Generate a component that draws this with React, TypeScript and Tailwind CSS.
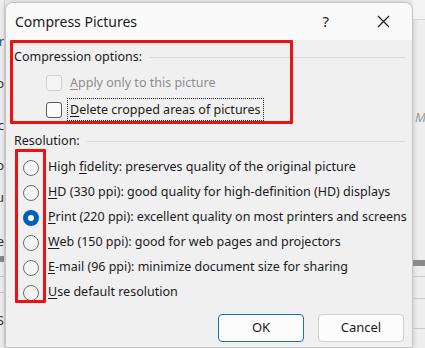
const font = { fontFamily: '"Noto Sans", "Open Sans", sans-serif' };

function Check({ label, keyChar, disabled, focused }: { label: string; keyChar: string; disabled?: boolean; focused?: boolean }) {
  const rest = label.slice(1);
  return (
    <div className="flex items-center h-[27px] pl-[32px] gap-[7px]">
      <span
        className={
          "w-[16px] h-[16px] rounded-[3px] border shrink-0 " +
          (disabled ? "border-[#d0d0d0] bg-[#f5f5f5]" : "border-[#5a5a5a] bg-[#fbfbfb]")
        }
      />
      <span
        className={
          "text-[12.5px] leading-[19px] px-[1px] " +
          (disabled ? "text-[#8d8d8d] " : "text-[#1a1a1a] ") +
          (focused ? "outline outline-1 outline-dotted outline-[#222] outline-offset-[1px]" : "")
        }
      >
        <span className="underline underline-offset-2">{keyChar}</span>
        {rest}
      </span>
    </div>
  );
}

function Radio({ pre, keyChar, post, checked }: { pre?: string; keyChar: string; post: string; checked?: boolean }) {
  return (
    <div className="flex items-center h-[25px] pl-[10px] gap-[9px]">
      {checked ? (
        <span className="w-[16px] h-[16px] rounded-full bg-[#005fb8] flex items-center justify-center shrink-0">
          <span className="w-[6px] h-[6px] rounded-full bg-white" />
        </span>
      ) : (
        <span className="w-[16px] h-[16px] rounded-full border border-[#6f6f6f] bg-[#f5f5f5] shrink-0" />
      )}
      <span className="text-[12.5px] text-[#1a1a1a] whitespace-nowrap">
        {pre}
        <span className="underline underline-offset-2">{keyChar}</span>
        {post}
      </span>
    </div>
  );
}

function GroupTitle({ text }: { text: string }) {
  return (
    <div className="flex items-center h-5 gap-[7px]">
      <span className="text-[12.5px] text-[#1a1a1a] whitespace-nowrap">{text}</span>
      <span className="flex-1 h-px bg-[#dadada]" />
    </div>
  );
}

export default function App() {
  return (
    <div className="w-[425px] h-[348px] bg-[#eeeeee] flex overflow-hidden" style={font}>
      {/* left edge of the window behind */}
      <div className="w-[5px] shrink-0 flex flex-col items-end overflow-hidden text-[13px] text-[#333] border-r border-[#d8d8d8]">
        <div className="h-[32px]" />
        <span className="h-[20px] text-[#2b4f8a] whitespace-nowrap">r</span>
        <div className="h-[22px]" />
        <span className="h-[20px] whitespace-nowrap">o</span>
        <div className="h-[22px]" />
        <span className="h-[20px] whitespace-nowrap">c</span>
        <div className="h-[20px]" />
        <span className="h-[20px] whitespace-nowrap">o</span>
        <div className="h-[12px]" />
        <span className="h-[20px] whitespace-nowrap">u</span>
        <div className="h-[24px]" />
        <span className="h-[20px] whitespace-nowrap">e</span>
        <div className="h-[4px]" />
        <div className="w-full h-[6px] bg-[#8a8a8a]" />
        <div className="h-[14px]" />
        <div className="w-full h-px bg-[#c8c8c8]" />
        <div className="h-[15px]" />
        <div className="w-full h-px bg-[#c8c8c8]" />
        <div className="h-[18px]" />
        <span className="h-[20px] whitespace-nowrap">S</span>
      </div>

      {/* dialog */}
      <div className="w-[408px] shrink-0 mt-[2px] rounded-t-[8px] border border-[#c4c4c4] bg-[#f0f0f0] overflow-hidden shadow-[0_0_6px_rgba(0,0,0,0.18)] flex flex-col">
        <div className="h-[37px] bg-[#f9f9f9] flex items-center pl-[9px] pr-[20px]">
          <span className="text-[14px] text-[#1a1a1a] flex-1">Compress Pictures</span>
          <span className="text-[15px] text-[#222] mr-[48px]">?</span>
          <svg width="13" height="13" viewBox="0 0 13 13" className="mr-[2px]">
            <path d="M1 1L12 12M12 1L1 12" stroke="#222" strokeWidth="1.2" />
          </svg>
        </div>

        <div className="relative flex flex-col px-[8px] pr-[2px] pt-[7px]">
          <div className="mr-[5px]">
            <GroupTitle text="Compression options:" />
          </div>
          <div className="mt-[2px]">
            <Check label="Apply only to this picture" keyChar="A" disabled />
            <Check label="Delete cropped areas of pictures" keyChar="D" focused />
          </div>

          <div className="mt-[8px] mr-[5px]">
            <GroupTitle text="Resolution:" />
          </div>
          <div className="mt-[4px] -ml-[1px] flex flex-col">
            <Radio pre="High " keyChar="f" post="idelity: preserves quality of the original picture" />
            <Radio keyChar="H" post="D (330 ppi): good quality for high-definition (HD) displays" />
            <Radio keyChar="P" post="rint (220 ppi): excellent quality on most printers and screens" checked />
            <Radio keyChar="W" post="eb (150 ppi): good for web pages and projectors" />
            <Radio keyChar="E" post="-mail (96 ppi): minimize document size for sharing" />
            <Radio keyChar="U" post="se default resolution" />
          </div>

          <div className="flex justify-end gap-[14px] mt-[9px] mr-[6px]">
            <button className="w-[86px] h-[28px] rounded-[4px] border border-[#1a6fc0] bg-[#fcfcfc] text-[13px] text-[#1a1a1a]">
              OK
            </button>
            <button className="w-[86px] h-[28px] rounded-[4px] border border-[#d0d0d0] bg-[#fcfcfc] text-[13px] text-[#1a1a1a]">
              Cancel
            </button>
          </div>

          {/* annotation boxes */}
          <div className="absolute left-[4px] top-[0px] w-[283px] h-[84px] border-[3px] border-[#ee1111] rounded-[1px]" />
          <div className="absolute left-[9px] top-[109px] w-[31px] h-[154px] border-[3px] border-[#ee1111] rounded-[1px]" />
        </div>
      </div>

      {/* right edge of the window behind */}
      <div className="flex-1 flex flex-col overflow-hidden text-[13px] text-[#9a9a9a]">
        <div className="h-[20px] bg-[#f3f3f3] border-b border-[#d4d4d4]" />
        <div className="h-[88px]" />
        <span className="h-[20px] pl-[2px] italic whitespace-nowrap">M</span>
        <div className="h-[132px]" />
        <div className="h-[6px] bg-[#8a8a8a]" />
        <div className="h-[10px]" />
        <div className="h-px bg-[#c8c8c8]" />
        <div className="h-[21px]" />
        <div className="h-px bg-[#c8c8c8]" />
        <div className="h-[29px]" />
        <div className="h-px bg-[#c8c8c8]" />
      </div>
    </div>
  );
}
